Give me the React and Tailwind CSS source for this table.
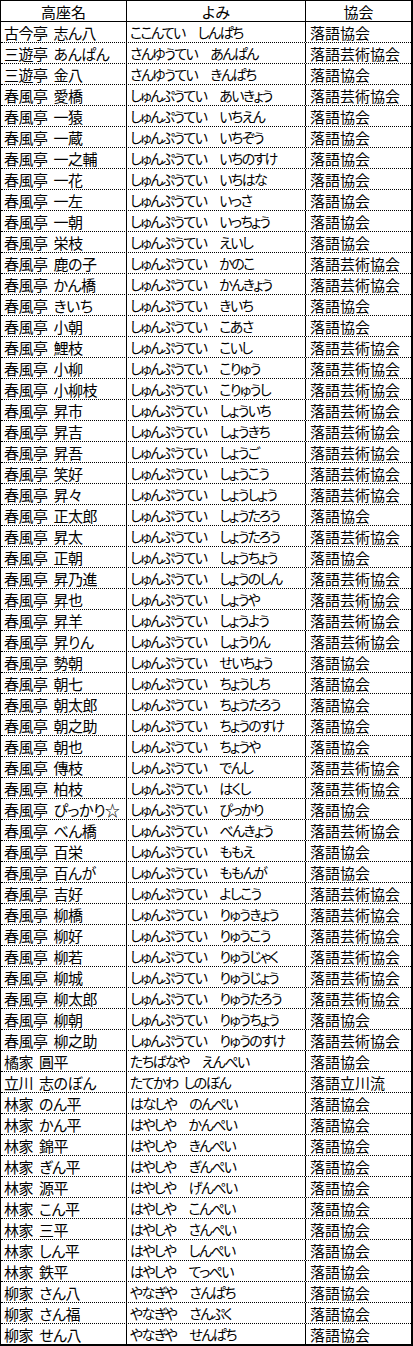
const rows = [
  ["古今亭 志ん八", "ここんてい　しんぱち", "落語協会"],
  ["三遊亭 あんぱん", "さんゆうてい　あんぱん", "落語芸術協会"],
  ["三遊亭 金八", "さんゆうてい　きんぱち", "落語協会"],
  ["春風亭 愛橋", "しゅんぷうてい　あいきょう", "落語芸術協会"],
  ["春風亭 一猿", "しゅんぷうてい　いちえん", "落語協会"],
  ["春風亭 一蔵", "しゅんぷうてい　いちぞう", "落語協会"],
  ["春風亭 一之輔", "しゅんぷうてい　いちのすけ", "落語協会"],
  ["春風亭 一花", "しゅんぷうてい　いちはな", "落語協会"],
  ["春風亭 一左", "しゅんぷうてい　いっさ", "落語協会"],
  ["春風亭 一朝", "しゅんぷうてい　いっちょう", "落語協会"],
  ["春風亭 栄枝", "しゅんぷうてい　えいし", "落語協会"],
  ["春風亭 鹿の子", "しゅんぷうてい　かのこ", "落語芸術協会"],
  ["春風亭 かん橋", "しゅんぷうてい　かんきょう", "落語芸術協会"],
  ["春風亭 きいち", "しゅんぷうてい　きいち", "落語協会"],
  ["春風亭 小朝", "しゅんぷうてい　こあさ", "落語協会"],
  ["春風亭 鯉枝", "しゅんぷうてい　こいし", "落語芸術協会"],
  ["春風亭 小柳", "しゅんぷうてい　こりゅう", "落語芸術協会"],
  ["春風亭 小柳枝", "しゅんぷうてい　こりゅうし", "落語芸術協会"],
  ["春風亭 昇市", "しゅんぷうてい　しょういち", "落語芸術協会"],
  ["春風亭 昇吉", "しゅんぷうてい　しょうきち", "落語芸術協会"],
  ["春風亭 昇吾", "しゅんぷうてい　しょうご", "落語芸術協会"],
  ["春風亭 笑好", "しゅんぷうてい　しょうこう", "落語芸術協会"],
  ["春風亭 昇々", "しゅんぷうてい　しょうしょう", "落語芸術協会"],
  ["春風亭 正太郎", "しゅんぷうてい　しょうたろう", "落語協会"],
  ["春風亭 昇太", "しゅんぷうてい　しょうたろう", "落語芸術協会"],
  ["春風亭 正朝", "しゅんぷうてい　しょうちょう", "落語協会"],
  ["春風亭 昇乃進", "しゅんぷうてい　しょうのしん", "落語芸術協会"],
  ["春風亭 昇也", "しゅんぷうてい　しょうや", "落語芸術協会"],
  ["春風亭 昇羊", "しゅんぷうてい　しょうよう", "落語芸術協会"],
  ["春風亭 昇りん", "しゅんぷうてい　しょうりん", "落語芸術協会"],
  ["春風亭 勢朝", "しゅんぷうてい　せいちょう", "落語協会"],
  ["春風亭 朝七", "しゅんぷうてい　ちょうしち", "落語協会"],
  ["春風亭 朝太郎", "しゅんぷうてい　ちょうたろう", "落語協会"],
  ["春風亭 朝之助", "しゅんぷうてい　ちょうのすけ", "落語協会"],
  ["春風亭 朝也", "しゅんぷうてい　ちょうや", "落語協会"],
  ["春風亭 傳枝", "しゅんぷうてい　でんし", "落語芸術協会"],
  ["春風亭 柏枝", "しゅんぷうてい　はくし", "落語芸術協会"],
  ["春風亭 ぴっかり☆", "しゅんぷうてい　ぴっかり", "落語協会"],
  ["春風亭 べん橋", "しゅんぷうてい　べんきょう", "落語芸術協会"],
  ["春風亭 百栄", "しゅんぷうてい　ももえ", "落語協会"],
  ["春風亭 百んが", "しゅんぷうてい　ももんが", "落語協会"],
  ["春風亭 吉好", "しゅんぷうてい　よしこう", "落語芸術協会"],
  ["春風亭 柳橋", "しゅんぷうてい　りゅうきょう", "落語芸術協会"],
  ["春風亭 柳好", "しゅんぷうてい　りゅうこう", "落語芸術協会"],
  ["春風亭 柳若", "しゅんぷうてい　りゅうじゃく", "落語芸術協会"],
  ["春風亭 柳城", "しゅんぷうてい　りゅうじょう", "落語芸術協会"],
  ["春風亭 柳太郎", "しゅんぷうてい　りゅうたろう", "落語芸術協会"],
  ["春風亭 柳朝", "しゅんぷうてい　りゅうちょう", "落語協会"],
  ["春風亭 柳之助", "しゅんぷうてい　りゅうのすけ", "落語芸術協会"],
  ["橘家 圓平", "たちばなや　えんぺい", "落語協会"],
  ["立川 志のぼん", "たてかわ しのぼん", "落語立川流"],
  ["林家 のん平", "はなしや　のんぺい", "落語協会"],
  ["林家 かん平", "はやしや　かんぺい", "落語協会"],
  ["林家 錦平", "はやしや　きんぺい", "落語協会"],
  ["林家 ぎん平", "はやしや　ぎんぺい", "落語協会"],
  ["林家 源平", "はやしや　げんぺい", "落語協会"],
  ["林家 こん平", "はやしや　こんぺい", "落語協会"],
  ["林家 三平", "はやしや　さんぺい", "落語協会"],
  ["林家 しん平", "はやしや　しんぺい", "落語協会"],
  ["林家 鉄平", "はやしや　てっぺい", "落語協会"],
  ["柳家 さん八", "やなぎや　さんぱち", "落語協会"],
  ["柳家 さん福", "やなぎや　さんぷく", "落語協会"],
  ["柳家 せん八", "やなぎや　せんぱち", "落語協会"],
];

// family name / given name, with the gap drawn as a fixed-width span
const Split = ({ text }) => {
  const wide = text.includes("　");
  const [a, b] = text.split(/[ 　]/);
  return (
    <>
      <span>{a}</span>
      <span className={wide ? "inline-block w-[13px] shrink-0" : "inline-block w-[6px] shrink-0"}></span>
      <span>{b}</span>
    </>
  );
};

const App = () => {
  return (
    <div className="w-[413px] bg-white text-black border-t border-l border-r-2 border-b-2 border-black font-['Noto_Sans_CJK_JP','Noto_Sans',sans-serif] text-[15px] leading-none [font-feature-settings:'palt']">
      {/* header */}
      <div className="flex h-[21px] border-b border-black">
        <div className="w-[126px] shrink-0 border-r border-black flex items-center justify-center">
          高座名
        </div>
        <div className="w-[179px] shrink-0 border-r border-black flex items-center justify-center">
          よみ
        </div>
        <div className="flex-1 flex items-center justify-center">協会</div>
      </div>

      {rows.map(([name, yomi, kyokai], i) => (
        <div
          key={i}
          className={
            i === rows.length - 1
              ? "flex h-[20px]"
              : "flex h-[21px] border-b border-dotted border-black"
          }
        >
          <div className="w-[126px] shrink-0 border-r border-black flex items-center pl-[3px] whitespace-nowrap tracking-[-0.5px]">
            <Split text={name} />
          </div>
          <div className="w-[179px] shrink-0 border-r border-black flex items-center pl-[3px] whitespace-nowrap overflow-hidden text-[14px] tracking-[-1.6px]">
            <Split text={yomi} />
          </div>
          <div className="flex-1 flex items-center pl-[4px] whitespace-nowrap">
            {kyokai}
          </div>
        </div>
      ))}
    </div>
  );
};

export default App;
